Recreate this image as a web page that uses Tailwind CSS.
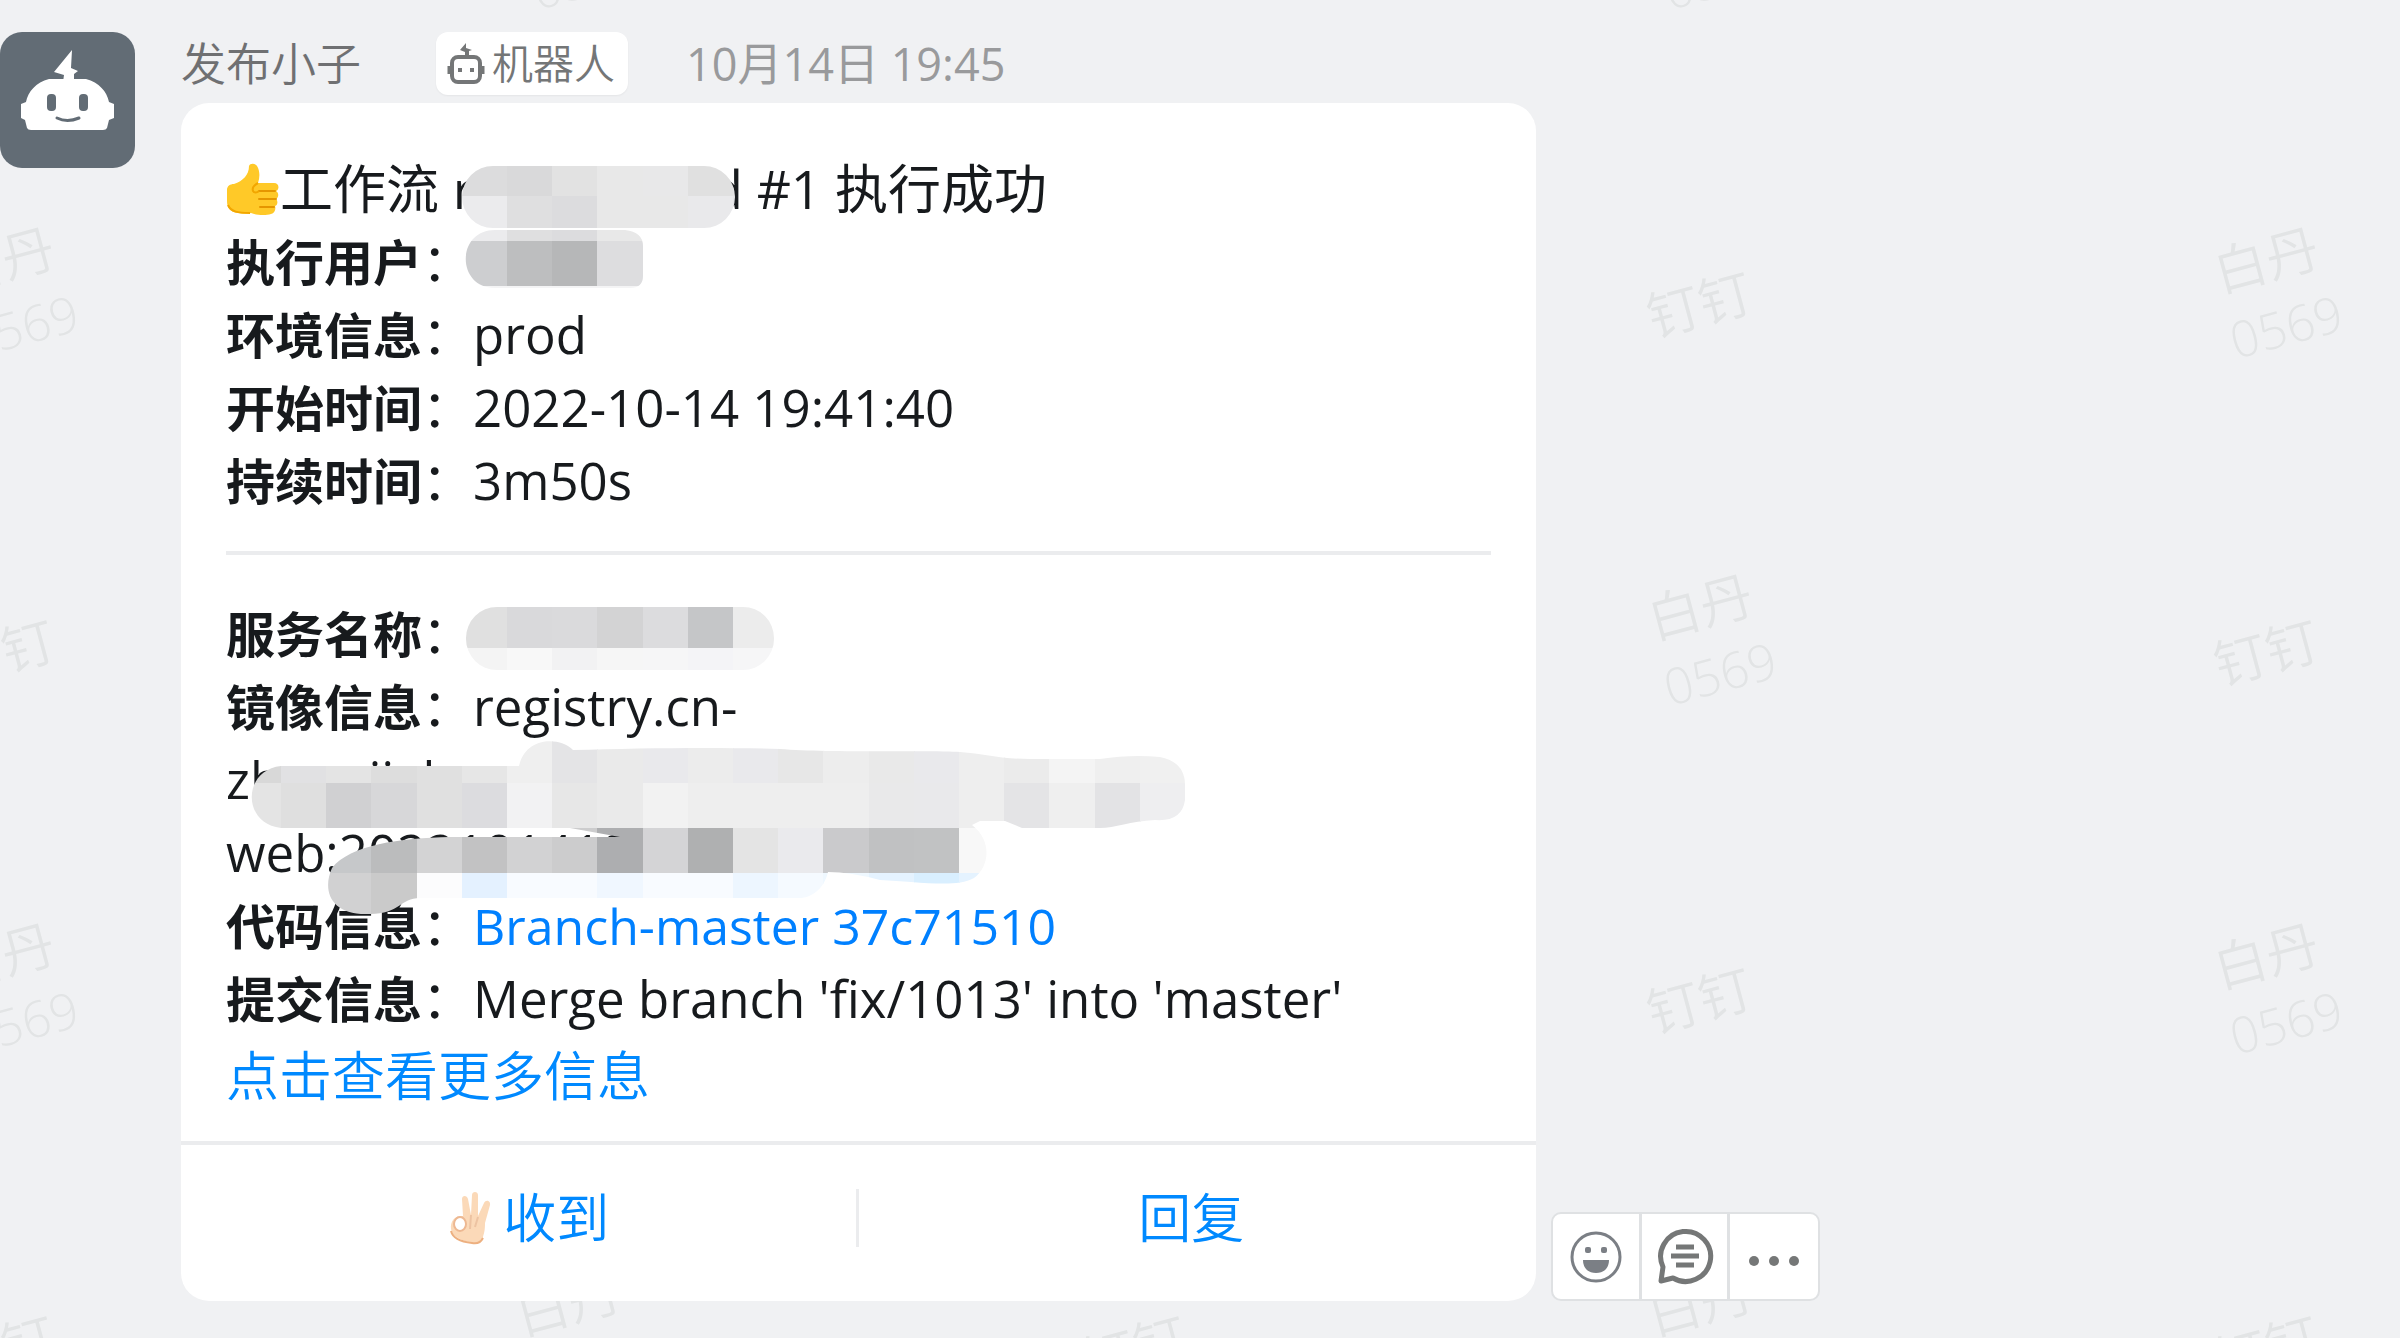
<!DOCTYPE html>
<html lang="zh-CN">
<head>
  <meta charset="UTF-8" />
  <meta name="viewport" content="width=device-width, initial-scale=1.0"/>
  <title>发布小子 - 工作流通知</title>
  <script src="https://cdn.jsdelivr.net/npm/@tailwindcss/browser@4"></script>
</head>
<body class="bg-[#f0f1f3] text-[#171a1d] font-['Open_Sans','Noto_Sans_CJK_SC',sans-serif]">
  <div class="relative min-h-screen overflow-hidden">

    <!-- Watermark -->
    <svg class="absolute inset-0 w-full h-full" aria-hidden="true">
      <defs>
        <pattern id="watermark" x="-283" y="150" width="1132" height="696" patternUnits="userSpaceOnUse">
          <g class="fill-[#e2e4e5] font-[350]" font-size="53" text-anchor="middle" dominant-baseline="central">
            <text transform="translate(285 109) rotate(-15)">白丹</text>
            <text transform="translate(305 176) rotate(-15)" font-size="50">0569</text>
            <text transform="translate(285 502) rotate(-15)">钉钉</text>
            <text transform="translate(850 154) rotate(-15)">钉钉</text>
            <text transform="translate(851 456) rotate(-15)">白丹</text>
            <text transform="translate(871 523) rotate(-15)" font-size="50">0569</text>
          </g>
        </pattern>
      </defs>
      <rect width="100%" height="100%" fill="url(#watermark)"/>
    </svg>

    <main class="relative flex items-start gap-[46px] pt-8">
      <!-- Avatar -->
      <svg class="w-[135px] h-[136px] shrink-0 rounded-[22px] bg-[#626c75]" viewBox="0 0 135 136" fill="#fff" role="img" aria-label="发布小子">
        <path d="M72 18L54 40l10 3-1 7h11V42l4-3-7-3z"/>
        <path d="M49 47h37c13 3 21 13 23 23l5 2v14l-5 2-2 8q-1 2-4 2H31q-3 0-4-2l-2-8-4-2V72l5-2c2-10 10-20 23-23z"/>
        <rect x="47" y="62" width="9" height="17" rx="4" fill="#626c75"/>
        <rect x="79" y="62" width="9" height="17" rx="4" fill="#626c75"/>
        <path d="M57 86q10 5 22 0" stroke="#626c75" stroke-width="3" fill="none" stroke-linecap="round"/>
      </svg>

      <div class="flex-1 min-w-0">
        <!-- Sender -->
        <header class="flex items-center h-[63px] text-[45px] font-[350]">
          <span class="text-[#6f7072]">发布小子</span>
          <span class="ml-[75px] flex items-center gap-[7px] h-[63px] pl-[11px] pr-[13px] rounded-[12px] bg-white text-[41px] text-[#747677] shadow-xs">
            <svg class="w-[38px] h-[44px]" viewBox="0 0 38 44" fill="none" stroke="#747677" stroke-width="4" stroke-linejoin="round" aria-hidden="true">
              <rect x="5" y="15" width="28" height="25" rx="6"/>
              <path d="M2 24v8M36 24v8" stroke-width="3"/>
              <path d="M19 1l-6 7 5 2v5h4V9l3-1-6-2z" fill="#747677" stroke="none"/>
              <path d="M13 26v4M25 26v4"/>
            </svg>
            机器人
          </span>
          <time class="ml-[58px] text-[#999a9c] font-normal">10月14日 19:45</time>
        </header>

        <div class="flex items-end gap-[15px] mt-2">
          <!-- Message card -->
          <article class="relative w-full max-w-[1355px] bg-white rounded-[28px]">
            <div class="px-[45px] pt-[49px] pb-6 text-[51px] leading-[73px]">
              <p class="flex items-center h-[73px] text-[53px] whitespace-pre"><svg class="w-[54px] h-[54px]" viewBox="0 0 54 54" role="img" aria-label="👍">
                  <path d="M23 4c1-3 6-3 8 0 3 5 3 11 1 17h16c5 0 6 6 2 8 3 2 3 6 0 8 2 2 2 6-1 7 1 3 0 7-4 8-6 2-15 1-20-1-3 1-10 1-13 0C4 50 1 46 1 39V28c0-4 3-6 7-6 9-3 15-9 15-18z" fill="#ffc928"/>
                  <path d="M33 29h16M33 37h17M34 45h14" stroke="#e59600" stroke-width="2" stroke-linecap="round"/>
                  <path d="M32 21c-4 2-6 5-5 8 1 2 4 2 6 0M2 43c3 7 10 8 22 8" stroke="#f2a600" stroke-width="2" fill="none"/>
                </svg>工作流 r<span class="w-[236px]"></span>d #1 执行成功</p>
              <p><b class="text-[49px] leading-none">执行用户</b>：</p>
              <p><b class="text-[49px] leading-none">环境信息</b>：prod</p>
              <p><b class="text-[49px] leading-none">开始时间</b>：2022-10-14 19:41:40</p>
              <p><b class="text-[49px] leading-none">持续时间</b>：3m50s</p>
              <hr class="mt-[34px] mb-[42px] border-t-4 border-[#ebecee]"/>
              <p><b class="text-[49px] leading-none">服务名称</b>：</p>
              <p><b class="text-[49px] leading-none">镜像信息</b>：registry.cn-<br/>zhangjiak<br/>web:2022101419</p>
              <p><b class="text-[49px] leading-none">代码信息</b>：<a href="#" class="text-[50px] leading-none text-[#0080ff] font-medium">Branch-master 37c71510</a></p>
              <p><b class="text-[49px] leading-none">提交信息</b>：Merge branch 'fix/1013' into 'master'</p>
              <a href="#" class="block leading-[82px] text-[53px] text-[#0089ff] font-[350]">点击查看更多信息</a>
            </div>

            <div class="grid grid-cols-2 border-t-4 border-[#ebecee] pt-[44px] pb-[54px] text-[53px] leading-[58px] text-[#0089ff] font-[350]">
              <button class="flex items-center justify-center gap-2 pl-5 border-r-3 border-[#ebecee]">
                <svg class="w-[48px] h-[54px]" viewBox="0 0 48 54" aria-hidden="true">
                  <path d="M16 25L15 8c0-4 5-4 6 0l3 16 1-20c0-4 6-4 6 0l0 21 6-13c2-4 7-2 6 2l-5 18c0 8-1 10-2 14-1 6-6 7-11 6-9-2-20-6-21-14-1-8 4-14 12-13z" fill="#fbd9b8"/>
                  <path d="M4 40c2 8 12 11 21 12 5 1 9-1 11-5" stroke="#edb080" stroke-width="2" fill="none"/>
                  <path d="M24 24l-1 14M31 26l-3 10" stroke="#edc3a2" stroke-width="2" fill="none"/>
                  <ellipse cx="13" cy="33" rx="6" ry="7" fill="#fff" stroke="#edb892" stroke-width="2"/>
                </svg>收到</button>
              <button class="pr-3">回复</button>
            </div>

            <!-- Redacted areas -->
            <svg class="absolute left-0 top-0 w-[1355px] h-[1197px] pointer-events-none" viewBox="181 103 1355 1197" aria-hidden="true">
              <defs>
                <clipPath id="smudge">
                  <rect x="462" y="166" width="273" height="62" rx="31"/>
                  <path d="M495 230H625Q643 232 643 246V276Q643 288 630 288H495C456 288 456 230 495 230z"/>
                  <rect x="466" y="607" width="308" height="63" rx="31"/>
                  <path d="M281 766H519C526 736 560 737 573 750C640 748 720 747 780 749C830 753 940 750 960 752C985 754 1000 759 1030 759H1100C1120 756 1140 755 1160 757Q1185 762 1185 785V800Q1182 822 1155 820C1130 821 1115 828 1100 828H1022L1005 821H980L972 825C992 840 990 866 974 878C955 888 925 882 880 880Q850 872 828 872C824 890 810 898 800 898H420C400 898 400 914 370 914C330 916 322 890 332 868C350 845 400 838 450 837H620L570 828H281C242 824 242 770 281 766z"/>
                </clipPath>
              </defs>
              <g id="mosaic" clip-path="url(#smudge)" shape-rendering="crispEdges"></g>
            </svg>
          </article>

          <!-- Message actions -->
          <div class="flex shrink-0 h-[89px] bg-white border-2 border-[#dfe1e3] rounded-[10px]" role="toolbar">
            <button class="w-[86px] flex items-center justify-center" aria-label="表情">
              <svg class="w-[54px] h-[54px]" viewBox="0 0 54 54" fill="#7b7f85">
                <circle cx="27" cy="27" r="24" fill="none" stroke="#7b7f85" stroke-width="3"/>
                <rect x="16" y="17" width="6" height="6" rx="2"/>
                <rect x="32" y="17" width="6" height="6" rx="2"/>
                <path d="M14 30h26c0 8-5 13-13 13s-13-5-13-13z"/>
              </svg>
            </button>
            <button class="w-[91px] flex items-center justify-center border-x-3 border-[#dfe1e3]" aria-label="回复">
              <svg class="w-[58px] h-[58px]" viewBox="0 0 58 58" fill="none" stroke="#757777" stroke-width="5">
                <path d="M7 39A25 25 0 1 1 17 50L5 53z" stroke-linejoin="round"/>
                <path d="M20 19h18M15 28h28M20 37h18"/>
              </svg>
            </button>
            <button class="w-[88px] flex items-center justify-center" aria-label="更多">
              <svg class="w-[52px] h-[12px] mt-2" viewBox="0 0 52 12" fill="#757777">
                <circle cx="6" cy="6" r="5"/>
                <circle cx="26" cy="6" r="5"/>
                <circle cx="46" cy="6" r="5"/>
              </svg>
            </button>
          </div>
        </div>
      </div>
    </main>
  </div>

  <script>
    // one entry per mosaic row: top, first column, colors from left to right
    const rows = [
      [151, 4, '#dcdcdd #d9d9da #e2e2e2 #e8e8e8 #e8e8e9 #e0e0e0 #e2e2e3'],
      [196, 4, '#ebebed #dfdfe0 #dcdcde #e8e8e8 #e8e8e8 #e9e9eb #e4e4e6'],
      [241, 4, '#cdced0 #bdbebf #b6b7b8 #dddddf'],
      [286, 4, '#f4f4f5 #f4f4f5 #f4f4f5 #f4f4f5'],
      [603, 4, '#e0e0e0 #d9d9db #dadadc #d3d3d4 #dcdcde #c5c6c8 #ececec'],
      [648, 4, '#f4f4f4 #f8f8f8 #f2f2f3 #f6f6f6 #f6f6f7 #f4f4f7 #f6f6f7'],
      [738, -1, '#d8d8d8 #e1e1e3 #e4e4e4 #dddddd #e0e0e0 #e6e6e6 #efefef #e4e4e6 #eaeaea #e9e9ec #ececec #e9e9ec #e7e7e7 #ededed #e9e9e9 #e9e9ec #eeeeee #ebebeb #f4f4f4 #efefef #f0f0f0'],
      [783, -1, '#e4e4e4 #dfdfdf #d0d0d2 #d7d7d9 #e0e0e0 #dcdcdf #f2f2f3 #e7e7e7 #eaeaea #f2f2f2 #eeeeee #eeeeee #eeeeee #eeeeee #e9e9ea #e9e9eb #eeeeee #e4e4e6 #efefef #e3e3e5 #eeeef0'],
      [828, 1, '#c6c8ca #bbbcbd #d3d3d4 #c2c2c3 #d2d2d3 #cccccd #adaeb0 #d4d4d6 #afb0b1 #e4e4e4 #eaeaed #cacacc #c0c1c2 #c1c2c3 #f8f8f8'],
      [873, 1, '#d1d1d2 #cacaca #fcfcfd #e4f1ff #f8fbff #f8fbff #f0f7ff #f8fbff #f8fbff #edf6ff #f5faff #eff8ff #e5f3ff #d9efff #e5f3ff'],
    ];
    document.getElementById('mosaic').innerHTML = rows.map(([y, start, colors]) =>
      colors.split(' ').map((c, i) =>
        `<rect x="${Math.round(281 + (start + i) * 45.2)}" y="${y}" width="46" height="45" fill="${c}"/>`
      ).join('')
    ).join('');
  </script>
</body>
</html>
